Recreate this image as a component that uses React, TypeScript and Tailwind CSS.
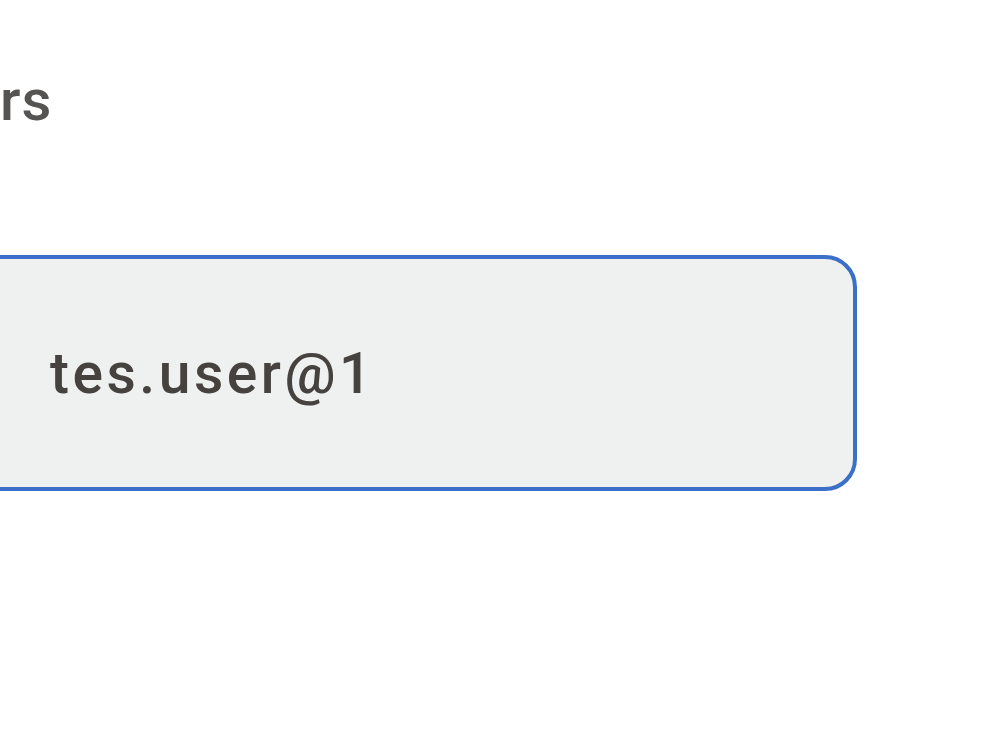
import React from 'react';

const App: React.FC = () => {
  return (
    <div className="w-[1000px] h-[750px] bg-white overflow-hidden" style={{ fontFamily: 'Roboto, "Noto Sans", sans-serif' }}>
      <div className="pt-[70px]">
        <p className="text-[58px] leading-[60px] font-medium text-[#555452] tracking-[1px]">rs</p>
      </div>
      <div className="mt-[125px] -ml-[40px] w-[897px]">
        <div className="h-[236px] rounded-[32px] border-[4px] border-[#3b6fc8] bg-[#eff0f0] flex items-center pl-[86px]">
          <span className="text-[57px] font-medium text-[#45423f] leading-none tracking-[3.5px]">tes.user@1</span>
        </div>
      </div>
    </div>
  );
};

export default App;
